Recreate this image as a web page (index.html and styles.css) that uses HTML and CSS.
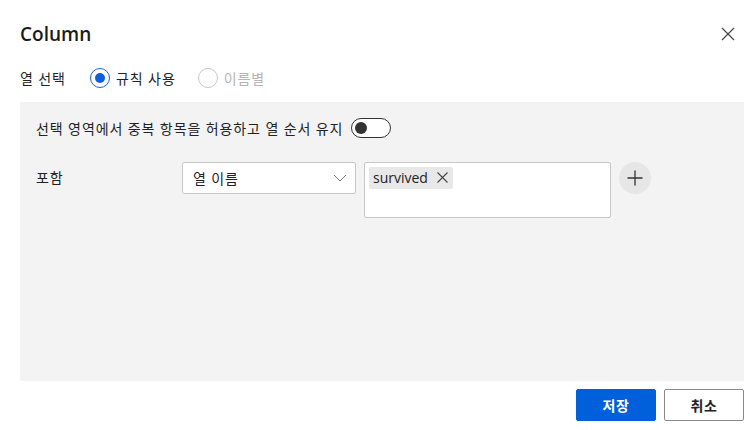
FILE: index.html
```html
<!DOCTYPE html>
<html lang="ko">
<head>
<meta charset="utf-8">
<link rel="stylesheet" href="styles.css">
</head>
<body>
<div class="dialog">
  <div class="header">
    <h1 class="title">Column</h1>
    <button class="close" aria-label="close">
      <svg width="14" height="14" viewBox="0 0 14 14"><path d="M1 1L13 13M13 1L1 13" stroke="#444" stroke-width="1.2" fill="none"/></svg>
    </button>
  </div>
  <div class="select-row ko">
    <span class="select-label">열 선택</span>
    <label class="radio checked"><span class="dot"></span>규칙 사용</label>
    <label class="radio disabled"><span class="dot"></span>이름별</label>
  </div>
  <div class="panel">
    <div class="toggle-row">
      <span class="ko">선택 영역에서 중복 항목을 허용하고 열 순서 유지</span>
      <span class="toggle"><span class="knob"></span></span>
    </div>
    <div class="rule-row">
      <span class="rule-label ko">포함</span>
      <div class="dropdown">
        <span class="ko">열 이름</span>
        <svg width="14" height="8" viewBox="0 0 14 8"><path d="M1 1L7 7L13 1" stroke="#777" stroke-width="1" fill="none"/></svg>
      </div>
      <div class="tagbox">
        <span class="tag">survived
          <svg width="11" height="11" viewBox="0 0 11 11"><path d="M0.5 0.5L10.5 10.5M10.5 0.5L0.5 10.5" stroke="#444" stroke-width="1.1" fill="none"/></svg>
        </span>
      </div>
      <button class="plus" aria-label="add">
        <svg width="16" height="16" viewBox="0 0 16 16"><path d="M8 0.5V15.5M0.5 8H15.5" stroke="#333" stroke-width="1.3" fill="none"/></svg>
      </button>
    </div>
  </div>
  <div class="footer">
    <button class="btn primary">저장</button>
    <button class="btn secondary">취소</button>
  </div>
</div>
</body>
</html>
```

FILE: styles.css
```css
* { box-sizing: border-box; }
html, body { margin: 0; padding: 0; background: #fff; }
body {
  font-family: "Open Sans", "Noto Sans CJK KR", sans-serif;
  font-size: 14px;
  color: #222;
  width: 756px;
  height: 430px;
  overflow: hidden;
}
.ko { letter-spacing: 0.9px; }
.dialog { padding: 0 12px 0 20px; }
.header {
  display: flex;
  justify-content: space-between;
  align-items: center;
  height: 66px;
  padding-top: 1px;
}
.title {
  margin: 0;
  font-size: 19px;
  font-weight: 600;
  color: #1b1b1b;
}
.close {
  border: none; background: none; padding: 0;
  width: 14px; height: 14px;
  margin-right: 9px;
  display: flex;
}
.select-row {
  display: flex;
  align-items: center;
  height: 24px;
  margin-bottom: 12px;
}
.select-label { width: 70px; }
.radio {
  display: flex;
  align-items: center;
  gap: 6px;
  margin-right: 22px;
}
.dot {
  width: 20px; height: 20px;
  border-radius: 50%;
  border: 1px solid #1266d6;
  position: relative;
  background: #fff;
}
.radio.checked .dot::after {
  content: "";
  position: absolute;
  left: 4px; top: 4px;
  width: 10px; height: 10px;
  border-radius: 50%;
  background: #0f5fd8;
}
.radio.disabled { color: #b4b4b4; }
.radio.disabled .dot { border-color: #c8c8c8; }
.panel {
  background: #f3f3f3;
  width: 724px;
  height: 279px;
  padding: 16px 16px;
}
.toggle-row {
  display: flex;
  align-items: center;
  gap: 8px;
  height: 20px;
  margin-bottom: 24px;
}
.toggle {
  width: 40px; height: 20px;
  border: 1px solid #333;
  border-radius: 10px;
  background: #fff;
  display: flex;
  align-items: center;
  padding-left: 3px;
}
.knob {
  width: 12px; height: 12px;
  border-radius: 50%;
  background: #333;
}
.rule-row {
  display: flex;
  align-items: flex-start;
}
.rule-label {
  width: 146px;
  line-height: 32px;
}
.dropdown {
  width: 174px;
  height: 32px;
  background: #fff;
  border: 1px solid #c8c8c8;
  border-radius: 2px;
  display: flex;
  align-items: center;
  justify-content: space-between;
  padding: 0 8px 0 10px;
  margin-right: 8px;
}
.tagbox {
  width: 247px;
  height: 56px;
  background: #fff;
  border: 1px solid #c8c8c8;
  border-radius: 2px;
  padding: 4px;
  margin-right: 8px;
}
.tag {
  display: inline-flex;
  align-items: center;
  gap: 9px;
  height: 22px;
  background: #e8e8e8;
  padding: 0 5px 2px 4px;
  border-radius: 2px;
  font-size: 14px;
  color: #222;
}
.tag svg { margin-top: 1px; }
.plus {
  width: 32px; height: 32px;
  border-radius: 50%;
  border: none;
  background: #e6e6e6;
  display: flex;
  align-items: center;
  justify-content: center;
  padding: 0;
}
.footer {
  display: flex;
  justify-content: flex-end;
  gap: 8px;
  padding-top: 8px;
}
.btn {
  width: 80px;
  height: 32px;
  font-family: "Noto Sans CJK KR", sans-serif;
  font-size: 14px;
  font-weight: 700;
  border-radius: 2px;
  letter-spacing: 0.5px;
}
.primary {
  background: #005fdb;
  color: #fff;
  border: 1px solid #005fdb;
}
.secondary {
  background: #fff;
  color: #222;
  border: 1px solid #8a8a8a;
}
```
